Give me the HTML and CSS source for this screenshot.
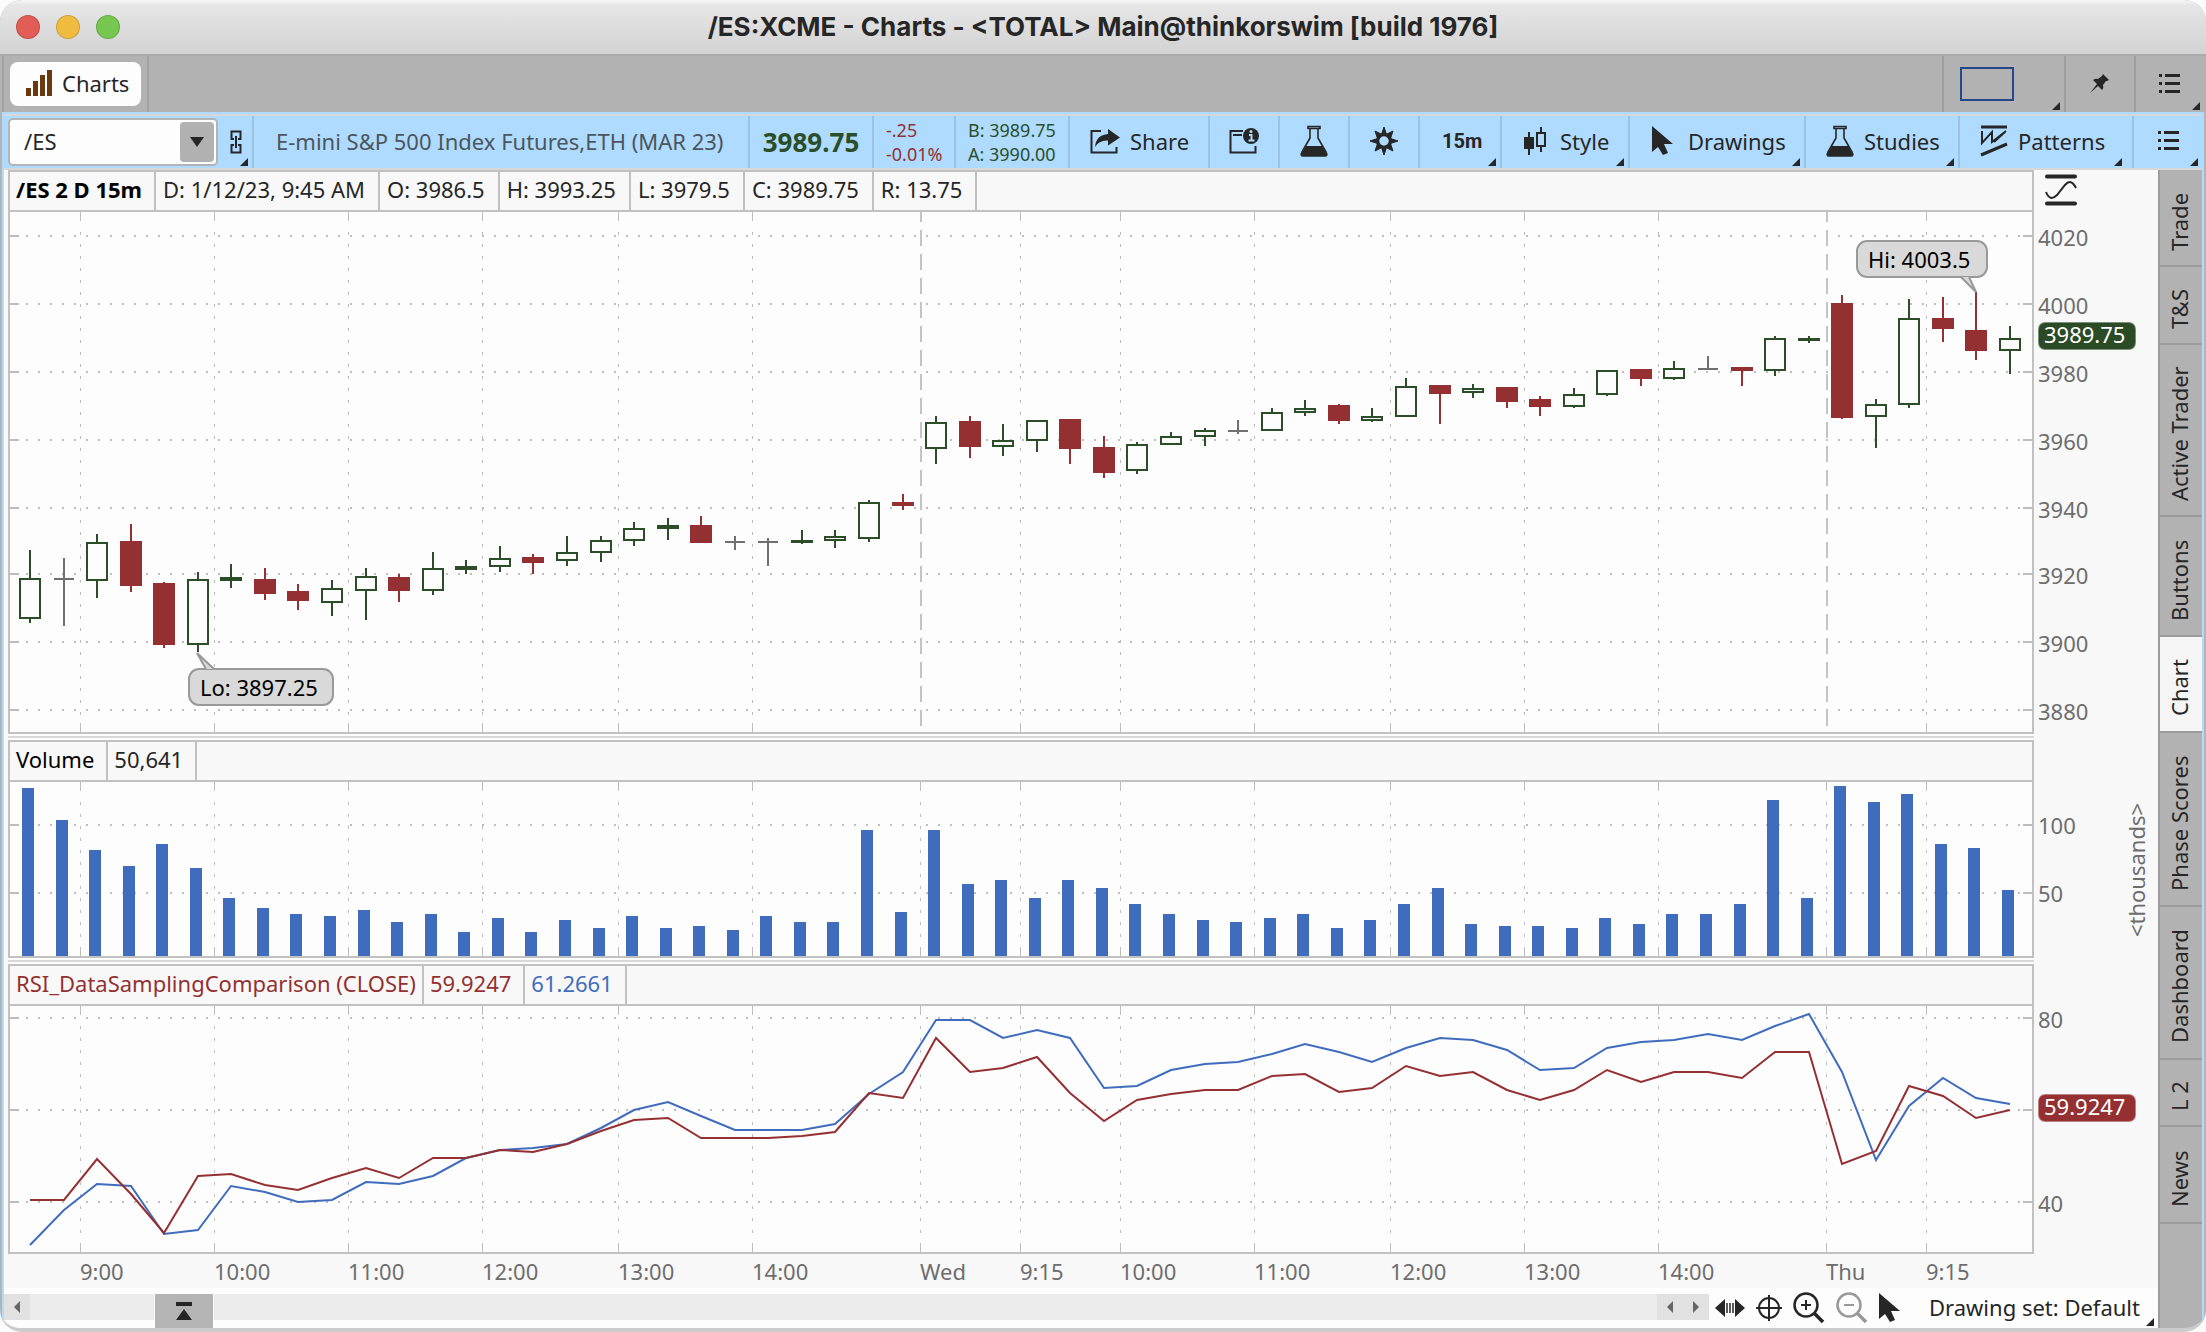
FILE: index.html
```html
<!DOCTYPE html>
<html lang="en">
<head>
<meta charset="utf-8">
<title>/ES:XCME - Charts</title>
<link rel="stylesheet" href="styles.css">
</head>
<body>
<svg class="defs" aria-hidden="true">
  <symbol id="flask" viewBox="0 0 28 32"><path d="M8 1.5h12v2H8zM10 4v9L2 27q-2 4 1 4h22q3 0 1-4L18 13V4" fill="none" stroke="#262626" stroke-width="1.6"/><path d="M6 21h16l4 7q1 3-2 3H4q-3 0-2-3z" fill="#262626"/></symbol>
  <symbol id="list" viewBox="0 0 22 22"><path d="M0 2.5h3M6 2.5h15M0 10.5h3M6 10.5h15M0 18.5h3M6 18.5h15" stroke="#262626" stroke-width="3"/></symbol>
  <symbol id="cursor" viewBox="0 0 22 30"><path d="M0 0v26l6-5 5 8 5-2-4-9h9z" fill="#262626"/></symbol>
</svg>
<div class="app">
  <header class="titlebar">
    <div class="lights"><span class="light red"></span><span class="light amber"></span><span class="light green"></span></div>
    <h1 class="title">/ES:XCME - Charts - &lt;TOTAL&gt; Main@thinkorswim [build 1976]</h1>
  </header>
  <nav class="tabs">
    <div class="tab-slot"><button class="tab"><svg width="26" height="28" viewBox="0 0 26 28"><path d="M2.5 19v8M9.500 12v15M16.500 6v21M23.500 1v26" stroke="#673a12" stroke-width="5"/></svg>Charts</button></div>
    <div class="tab-fill"></div>
    <button class="top-btn grid-btn corner" aria-label="Grid layout"><svg width="54" height="34"><rect x="1" y="1" width="52" height="32" fill="none" stroke="#26478a" stroke-width="2"/></svg></button>
    <button class="top-btn" aria-label="Pin"><svg width="20" height="20" viewBox="0 0 20 20"><path d="M13 0l6 6-2 1-1 0-3 4q1 3-1 5l-4-4-8 7 7-9-4-4q3-2 5-1l4-3z" fill="#262626"/></svg></button>
    <button class="top-btn corner last" aria-label="Menu"><svg width="22" height="22"><use href="#list"/></svg></button>
  </nav>
  <div class="frame">
    <div class="toolbar">
      <div class="cell symbol-cell corner">
        <div class="combo"><input class="combo-input" aria-label="Symbol" value="/ES"><button class="combo-btn" aria-label="Symbol list"><svg width="14" height="10"><path d="M0 0h14l-7 10z" fill="#262626"/></svg></button></div>
        <button class="link-btn" aria-label="Link"><svg width="12" height="24" viewBox="0 0 12 24"><path d="M4 9H1.500V1.500h9V9H8M4 15H1.500v7.500h9V15H8M6 6v12" fill="none" stroke="#262626" stroke-width="2"/></svg></button>
      </div>
      <div class="cell desc">E-mini S&amp;P 500 Index Futures,ETH (MAR 23)</div>
      <div class="cell price">3989.75</div>
      <div class="cell stack change"><span>-.25</span><span>-0.01%</span></div>
      <div class="cell stack quote"><span>B: 3989.75</span><span>A: 3990.00</span></div>
      <button class="cell btn share"><svg width="30" height="26" viewBox="0 0 30 26"><path d="M11 3H1.500v21.500h25V19" fill="none" stroke="#262626" stroke-width="2"/><path d="M5 19Q6 7 18 6V1l12 8.500-12 8v-5Q9 12 5 19z" fill="#262626"/></svg>Share</button>
      <button class="cell btn tool" aria-label="Information"><svg width="30" height="26" viewBox="0 0 30 26"><path d="M14 3H1.500v21.500h25V18M4 7h9" fill="none" stroke="#262626" stroke-width="2"/><circle cx="22" cy="8" r="8" fill="#262626"/><path d="M20 7h2.500v5.500M19.500 12.500h6" fill="none" stroke="#aedbff" stroke-width="2"/><circle cx="22" cy="3.500" r="1.500" fill="#aedbff"/></svg></button>
      <button class="cell btn tool" aria-label="Flask"><svg width="28" height="32"><use href="#flask"/></svg></button>
      <button class="cell btn tool" aria-label="Settings"><svg width="28" height="28" viewBox="-14 -14 28 28"><path d="M-2-8L0-14 2-8zM-2 8L0 14 2 8zM-8-2l-6 2 6 2zM8-2l6 2-6 2z" fill="#262626" stroke="#262626"/><path d="M-7-4l-2-6 6 3zM7-4l2-6-6 3zM-7 4l-2 6 6-3zM7 4l2 6-6-3z" fill="#262626" stroke="#262626"/><circle r="6.500" fill="none" stroke="#262626" stroke-width="3.500"/></svg></button>
      <button class="cell btn interval corner">15m</button>
      <button class="cell btn style corner"><svg width="24" height="28" viewBox="0 0 24 28"><path d="M0 10h10v12H0zM4 5h2v23H4z" fill="#262626"/><path d="M13 6h8v13h-8zM17 0v6M17 19v6" fill="none" stroke="#262626" stroke-width="2"/></svg>Style</button>
      <button class="cell btn drawings corner"><svg width="22" height="30"><use href="#cursor"/></svg>Drawings</button>
      <button class="cell btn studies corner"><svg width="28" height="32"><use href="#flask"/></svg>Studies</button>
      <button class="cell btn patterns corner"><svg width="28" height="32" viewBox="0 0 28 32"><path d="M1 2h26M1 30l26-11" stroke="#262626" stroke-width="3"/><path d="M2 6v12L12 7v10L26 6M14 17L25 7" fill="none" stroke="#262626" stroke-width="2"/></svg>Patterns</button>
      <button class="cell btn menu corner" aria-label="Chart menu"><svg width="22" height="22"><use href="#list"/></svg></button>
    </div>
    <div class="workspace">
      <main class="charts">
        <section class="panel price-panel">
          <div class="head"><b>/ES 2 D 15m</b><span>D: 1/12/23, 9:45 AM</span><span>O: 3986.5</span><span>H: 3993.25</span><span>L: 3979.5</span><span>C: 3989.75</span><span>R: 13.75</span></div>
          <div class="head-side"><svg width="32" height="32" viewBox="0 0 32 32"><path d="M2 2.500h28M2 29.500h28" stroke="#262626" stroke-width="4" stroke-linecap="round"/><path d="M1 18Q5 28 12 21L20 11Q26 4 31 14" fill="none" stroke="#262626" stroke-width="2"/></svg></div>
          <svg class="plot" id="pricePlot" role="img" aria-label="Price chart"></svg>
          <svg class="axis" id="priceAxis"></svg>
        </section>
        <div class="splitter"></div>
        <section class="panel volume-panel">
          <div class="head"><span class="name">Volume</span><span>50,641</span></div>
          <div class="head-side"></div>
          <svg class="plot" id="volumePlot" role="img" aria-label="Volume chart"></svg>
          <svg class="axis" id="volumeAxis"></svg>
        </section>
        <div class="splitter"></div>
        <section class="panel rsi-panel">
          <div class="head"><span class="down study">RSI_DataSamplingComparison (CLOSE)</span><span class="down">59.9247</span><span class="info">61.2661</span></div>
          <div class="head-side"></div>
          <svg class="plot" id="rsiPlot" role="img" aria-label="RSI chart"></svg>
          <svg class="axis" id="rsiAxis"></svg>
        </section>
        <svg class="times" id="timeAxis"></svg>
        <footer class="bottom corner">
          <div class="scroll">
            <button class="scroll-btn" aria-label="Scroll to start"><svg width="6" height="12"><path d="M6 0v12L0 6z" fill="#666"/></svg></button>
            <div class="thumb"><svg width="16" height="18"><path d="M0 0h16v4H0zM8 7l8 11H0z" fill="#262626"/></svg></div>
            <div class="scroll-gap"></div>
            <button class="scroll-btn" aria-label="Scroll left"><svg width="6" height="12"><path d="M6 0v12L0 6z" fill="#666"/></svg></button>
            <button class="scroll-btn" aria-label="Scroll right"><svg width="6" height="12"><path d="M0 0v12l6-6z" fill="#666"/></svg></button>
          </div>
          <div class="zoomers">
            <button class="icon" aria-label="Fit width"><svg width="30" height="18" viewBox="0 0 30 18"><path d="M10 0v18L0 9zM20 0v18l10-9z" fill="#262626"/><path d="M12 4v10M15 4v10M18 4v10" stroke="#262626" stroke-width="1.500"/></svg></button>
            <button class="icon" aria-label="Crosshair"><svg width="26" height="26" viewBox="0 0 26 26"><path d="M13 0v26M0 13h26" stroke="#262626" stroke-width="2"/><circle cx="13" cy="13" r="10" fill="none" stroke="#262626" stroke-width="2"/></svg></button>
            <button class="icon" aria-label="Zoom in"><svg width="32" height="32" viewBox="0 0 32 32"><circle cx="13" cy="13" r="11.500" fill="none" stroke="#262626" stroke-width="2.500"/><path d="M13 8v10M8 13h10" stroke="#262626" stroke-width="2"/><path d="M21 21l9 9" stroke="#262626" stroke-width="3.500"/></svg></button>
            <button class="icon" aria-label="Zoom out" disabled><svg width="32" height="32" viewBox="0 0 32 32"><circle cx="13" cy="13" r="11.500" fill="none" stroke="#999" stroke-width="2.500"/><path d="M8 13h10" stroke="#999" stroke-width="2"/><path d="M21 21l9 9" stroke="#999" stroke-width="3.500"/></svg></button>
            <button class="icon" aria-label="Pointer"><svg width="22" height="30"><use href="#cursor"/></svg></button>
          </div>
          <button class="drawing-set">Drawing set: Default</button>
        </footer>
      </main>
      <aside class="side">
        <button class="side-tab trade">Trade</button>
        <button class="side-tab ts">T&amp;S</button>
        <button class="side-tab active-trader">Active Trader</button>
        <button class="side-tab buttons">Buttons</button>
        <button class="side-tab chart current">Chart</button>
        <button class="side-tab phase">Phase Scores</button>
        <button class="side-tab dashboard">Dashboard</button>
        <button class="side-tab l2">L 2</button>
        <button class="side-tab news">News</button>
      </aside>
    </div>
  </div>
</div>
<script src="charts.js"></script>
</body>
</html>
```
FILE: styles.css
```css
* { box-sizing: border-box; }
body { margin: 0; background: #fbfbfb; color: #262626; font: 22px/30px "Noto Sans", "Open Sans", sans-serif; }
button, input { font: inherit; color: inherit; border: 0; background: none; padding: 0; margin: 0; }
svg { flex: none; }
.defs { position: absolute; width: 0; height: 0; }
.app { display: flex; flex-direction: column; height: 100vh; min-height: 800px; overflow: hidden; border-radius: 22px; background: #b4b4b4; border-bottom: 4px solid #cccccc; }

.titlebar { flex: none; display: grid; grid-template-columns: 1fr auto 1fr; align-items: center; height: 56px; padding: 0 16px; background: linear-gradient(#f6f6f6, #e6e6e6 10%, #d2d2d2); border-bottom: 2px solid #ababab; }
.lights { display: flex; gap: 16px; }
.light { width: 24px; height: 24px; border-radius: 50%; border: 1px solid rgba(0, 0, 0, .15); }
.light.red { background: #e25d55; }
.light.amber { background: #efbc40; }
.light.green { background: #75c750; }
.title { margin: 0; font: 700 26px/30px Inter, sans-serif; }

.tabs { flex: none; display: flex; height: 56px; padding: 0 2px; background: #b2b2b2; }
.tab-slot { display: flex; align-items: center; padding: 0 6px; border: 2px solid #a2a2a2; border-width: 0 2px; }
.tab { display: flex; align-items: center; gap: 10px; height: 44px; padding: 0 12px 2px 16px; border-radius: 8px; background: #fdfdfd; }
.tab-fill { flex: 1; }
.top-btn { position: relative; display: flex; align-items: center; justify-content: center; width: 70px; border-left: 2px solid #9e9e9e; }
.grid-btn { width: 122px; justify-content: flex-start; padding-left: 16px; }
.corner { position: relative; }
.corner::after { content: ""; position: absolute; right: 4px; bottom: 2px; border: 4px solid transparent; border-right-color: #262626; border-bottom-color: #262626; }
.patterns.corner::after { right: 10px; }

.frame { flex: 1; min-height: 0; display: flex; flex-direction: column; border: solid #aedbff; border-width: 2px 2px 0; margin: 0 2px; }
.toolbar { flex: none; display: flex; height: 56px; border: solid #d8d8d8; border-width: 2px 0; background: #aedbff; }
.cell { flex: none; display: flex; align-items: center; border-right: 2px solid #9cc2e2; white-space: nowrap; }
.symbol-cell { width: 250px; padding-left: 4px; gap: 12px; }
.combo { display: flex; width: 210px; height: 48px; padding: 2px; border: 2px solid #b4b4b4; border-radius: 5px; background: #fdfdfd; }
.combo-input { flex: 1; min-width: 0; padding: 0 0 2px 12px; }
.combo-btn { display: flex; align-items: center; justify-content: center; width: 34px; border-radius: 4px; background: #b1b1b1; }
.link-btn { display: flex; }
.desc { flex: 1; padding: 0 0 2px 22px; color: #4c555c; overflow: hidden; }
.price { width: 124px; justify-content: center; font-size: 26px; font-weight: 700; color: #2b4e28; }
.stack { flex-direction: column; align-items: flex-start; justify-content: center; font-size: 18px; line-height: 24px; }
.change { width: 82px; padding-left: 12px; color: #943032; }
.quote { width: 114px; padding-left: 12px; color: #2b4e28; }
.btn { gap: 10px; padding-bottom: 2px; }
.share { width: 140px; padding-left: 20px; }
.tool { width: 70px; justify-content: center; }
.interval { width: 82px; padding-left: 22px; font: 700 20px/30px Roboto, sans-serif; }
.style { width: 128px; padding-left: 22px; gap: 12px; }
.drawings { width: 176px; padding-left: 22px; gap: 14px; }
.studies { width: 154px; padding-left: 20px; }
.patterns { width: 174px; padding-left: 20px; }
.menu { flex: 1 1 68px; max-width: 68px; padding-left: 24px; border: 0; }

.workspace { flex: 1; min-height: 0; display: flex; background: #fdfdfd; }
.charts { flex: 1; min-width: 0; display: flex; flex-direction: column; padding-left: 4px; background: #f8f8f8; }
.panel { display: grid; grid-template: 42px 1fr / 1fr 124px; min-height: 0; }
.price-panel { flex: 564 1 0; }
.volume-panel { flex: 218 1 0; }
.rsi-panel { flex: 290 1 0; }
.head { display: flex; border: 2px solid #c1c1c1; background: #f8f8f8; overflow: hidden; }
.head > * { flex: none; padding: 0 12px 0 6px; border-right: 2px solid #c1c1c1; line-height: 34px; white-space: nowrap; }
.price-panel .head span { padding: 0 13px 0 7px; }
.head .study { padding-right: 6px; }
.head b, .head .name { color: #000; }
.head .down { color: #943032; }
.head .info { color: #406cbd; }
.head-side { padding: 4px 0 0 11px; line-height: 0; }
.plot { width: 100%; height: 100%; min-height: 0; border: 2px solid #c1c1c1; border-top: 0; background: #fdfdfd; }
.axis { width: 124px; height: 100%; min-height: 0; }
.splitter { flex: none; height: 6px; margin-right: 124px; border: solid #fdfdfd; border-width: 2px 0; background: #d8d8d8; }
.times { flex: none; width: 100%; height: 34px; }
.axis text, .times text { fill: #6d6d6d; }
.axis text.on { fill: #fff; }

.bottom { flex: none; display: flex; height: 40px; margin-left: -4px; background: #fdfdfd; }
.scroll { flex: 1; display: flex; height: 26px; margin-top: 6px; background: #ececec; }
.scroll-btn { display: flex; align-items: center; justify-content: center; width: 26px; background: #e1e1e1; }
.thumb { display: flex; align-items: center; justify-content: center; width: 60px; height: 34px; margin-left: 124px; border: solid #fdfdfd; border-width: 0 1px; background: #b4b4b4; }
.scroll-gap { flex: 1; }
.zoomers { display: flex; align-items: center; gap: 11px; padding-left: 6px; }
.icon { display: flex; }
.drawing-set { padding: 0 18px 2px 28px; white-space: nowrap; }

.side { flex: none; width: 44px; display: flex; flex-direction: column; background: #b2b2b2; border-left: 2px solid #9c9c9c; }
.side-tab { display: flex; align-items: center; justify-content: center; min-height: 0; width: 42px; padding: 0 0 8px 4px; writing-mode: vertical-rl; transform: rotate(180deg); border-top: 2px solid #9c9c9c; white-space: nowrap; }
.side-tab.current { background: #f5f5f5; }
.trade { flex: 0 1 97px; }
.ts { flex: 0 1 78px; }
.active-trader { flex: 0 1 172px; }
.buttons { flex: 0 1 120px; }
.chart { flex: 0 1 96px; }
.phase { flex: 0 1 174px; }
.dashboard { flex: 0 1 153px; }
.l2 { flex: 0 1 67px; }
.news { flex: 0 1 97px; }
```
FILE: charts.js
```js
// Levels below are in canvas units; each panel maps its own [top, height] span to its box.
const SPAN = 2022;
const GREEN = '#2b4e28', RED = '#943032', BLUE = '#406cbd', GRAY = '#707070', GRID = '#bdbdbd';
const PRICE = [212, 520], VOLUME = [782, 174], RSI = [1006, 246];

// kind, high, body top, body bottom, low
const candles = [
  ['u',550,578,619,623],['n',558,579,579,626],['u',534,542,581,598],['d',524,541,586,592],['d',582,583,645,648],['u',572,579,645,652],
  ['s',564,577,581,588],['d',568,579,594,600],['d',584,591,601,610],['u',580,588,603,616],['u',568,576,591,620],['d',574,577,591,602],
  ['u',552,568,591,595],['s',560,566,570,574],['u',546,558,567,572],['d',554,557,563,574],['u',536,552,561,566],['u',536,540,553,562],
  ['u',522,528,541,546],['s',518,525,529,540],['d',516,525,543,543],['n',536,542,542,550],['n',538,542,542,566],['s',530,540,543,544],
  ['u',530,536,541,548],['u',500,502,539,542],['d',494,502,506,510],['u',416,422,449,464],['d',416,421,447,458],['u',424,440,447,456],
  ['u',420,420,441,452],['d',419,419,449,464],['d',436,447,473,478],['u',442,444,471,474],['u',432,436,445,445],['u',428,430,437,446],
  ['n',420,431,431,434],['u',408,412,431,431],['u',400,408,413,416],['d',404,405,421,424],['u',408,416,421,422],['u',378,386,417,417],
  ['d',385,385,394,424],['u',384,388,393,398],['d',387,387,402,408],['d',396,399,407,416],['u',388,394,407,408],['u',370,370,395,396],
  ['d',369,369,379,386],['u',361,368,379,380],['n',356,369,369,370],['d',367,367,371,386],['u',336,338,371,376],['s',336,338,341,343],
  ['d',295,303,418,419],['u',399,404,417,448],['u',299,318,405,408],['d',297,318,329,342],['d',292,330,351,360],['u',326,338,351,374]];
const volumes = [788,820,850,866,844,868,898,908,914,916,910,922,914,932,918,932,920,928,916,928,926,930,916,922,922,830,912,830,884,880,
  898,880,888,904,914,920,922,918,914,928,920,904,888,924,926,926,928,918,924,914,914,904,800,898,786,802,794,844,848,890];
const rsiRed = [1200,1200,1159,1194,1233,1176,1174,1185,1190,1178,1168,1178,1158,1158,1150,1152,1144,1131,1120,1118,1138,1138,1138,1136,1132,1093,1098,1038,1072,1068,
  1057,1093,1121,1100,1094,1090,1090,1076,1074,1092,1088,1066,1076,1072,1090,1100,1090,1070,1082,1072,1072,1078,1052,1052,1164,1151,1086,1096,1118,1110];
const rsiBlue = [1245,1210,1184,1186,1234,1230,1186,1192,1202,1200,1182,1184,1176,1158,1150,1148,1144,1128,1110,1102,1116,1130,1130,1130,1124,1094,1072,1020,1020,1038,
  1030,1038,1088,1086,1070,1064,1062,1054,1044,1052,1062,1048,1038,1040,1050,1070,1068,1048,1042,1040,1034,1040,1026,1014,1072,1160,1106,1078,1098,1104];
const times = [[70,'9:00'],[204,'10:00'],[338,'11:00'],[472,'12:00'],[608,'13:00'],[742,'14:00'],[910,'Wed'],[1010,'9:15'],[1110,'10:00'],
  [1244,'11:00'],[1380,'12:00'],[1514,'13:00'],[1648,'14:00'],[1816,'Thu'],[1916,'9:15']];
const days = [910, 1816];

const el = (tag, attrs, text) =>
  `<${tag} ${Object.entries(attrs).map(([k, v]) => `${k}="${v}"`).join(' ')}>${text || ''}</${tag}>`;
const line = (x1, y1, x2, y2, stroke, more) => el('line', { x1, y1, x2, y2, stroke, 'stroke-width': 2, ...more });

function box(id, span) {
  const node = document.getElementById(id);
  const w = node.clientWidth || node.getBoundingClientRect().width - 4;
  const h = (node.clientHeight || node.getBoundingClientRect().height - 2);
  return { node, w, h, x: v => Math.round(v * w / SPAN), y: v => Math.round((v - span[0]) * h / span[1]) };
}
const centre = i => 20 + 33.56 * i;

function grid(b, rows, dayLines) {
  let out = '';
  for (const r of rows) {
    const y = b.y(r);
    out += line(16, y, b.w - 12, y, GRID, { 'stroke-dasharray': '2 10' });
    out += line(0, y, 9, y, GRID) + line(b.w - 9, y, b.w, y, GRID);
  }
  for (const [t] of times) {
    const x = b.x(t);
    if (dayLines && days.includes(t)) {
      out += line(x + 1, 0, x + 1, b.h, '#c4c4c4', { 'stroke-dasharray': '16 8', 'stroke-dashoffset': 6 });
      continue;
    }
    out += line(x + .5, 20, x + .5, b.h - 12, GRID, { 'stroke-width': 1, 'stroke-dasharray': '3 9' });
    out += line(x + .5, 0, x + .5, 9, GRID, { 'stroke-width': 1 }) + line(x + .5, b.h - 9, x + .5, b.h, GRID, { 'stroke-width': 1 });
  }
  return out;
}

function callout(b, left, top, width, text, tail) {
  const x = b.x(left), y = b.y(top), dx = x - left;
  const pts = tail.map(([px, py]) => `${px + dx},${b.y(py)}`);
  return el('rect', { x, y, width, height: 36, rx: 10, fill: '#d9d9d9', stroke: '#999', 'stroke-width': 2 }) +
    el('polygon', { points: pts.join(' '), fill: '#d9d9d9' }) +
    el('polyline', { points: pts.join(' '), fill: 'none', stroke: '#999', 'stroke-width': 2 }) +
    el('text', { x: x + 11, y: y + 27, fill: '#000' }, text);
}

function drawPrice() {
  const b = box('pricePlot', PRICE);
  let out = grid(b, [236, 304, 372, 440, 508, 574, 642, 710], true);
  candles.forEach(([kind, hi, top, bottom, lo], i) => {
    const x = b.x(centre(i)), t = b.y(top), h = b.y(bottom) - t;
    const colour = { u: GREEN, s: GREEN, d: RED, n: GRAY }[kind];
    out += line(x, b.y(hi), x, b.y(lo), colour);
    if (kind === 'n') out += line(x - 10, t, x + 10, t, colour);
    else if (kind === 'u') out += el('rect', { x: x - 10, y: t + 1, width: 20, height: h - 2, fill: '#fdfdfd', stroke: colour, 'stroke-width': 2 });
    else out += el('rect', { x: x - 11, y: t, width: 22, height: h, fill: colour });
  });
  out += callout(b, 1847, 241, 130, 'Hi: 4003.5', [[1951, 277], [1966, 292], [1959, 277]]);
  out += callout(b, 179, 669, 144, 'Lo: 3897.25', [[196, 669], [187, 653], [204, 669]]);
  b.node.innerHTML = out;
}

function drawVolume() {
  const b = box('volumePlot', VOLUME);
  let out = grid(b, [825, 893]);
  volumes.forEach((v, i) => {
    out += el('rect', { x: b.x(centre(i)) - 8, y: b.y(v), width: 12, height: b.h - b.y(v), fill: BLUE });
  });
  b.node.innerHTML = out;
}

function drawRsi() {
  const b = box('rsiPlot', RSI);
  const path = (data, stroke) => el('polyline', { points: data.map((v, i) => `${b.x(centre(i))},${b.y(v)}`).join(' '), fill: 'none', stroke, 'stroke-width': 2 });
  b.node.innerHTML = grid(b, [1018, 1110, 1202]) + path(rsiBlue, BLUE) + path(rsiRed, RED);
}

function drawAxis(id, span, labels, badge) {
  const node = document.getElementById(id);
  const h = node.getBoundingClientRect().height - 2;
  const y = v => Math.round((v - span[0]) * h / span[1]);
  let out = labels.map(([v, t]) => el('text', { x: 4, y: y(v) + 10 }, t)).join('');
  if (badge) {
    const [v, text, colour] = badge;
    out += el('rect', { x: 5, y: y(v) - 13, width: 96, height: 26, rx: 6, fill: colour, stroke: colour, 'stroke-opacity': .6, 'stroke-width': 2 });
    out += el('text', { x: 10, y: y(v) + 7, class: 'on' }, text);
  }
  if (id === 'volumeAxis') out += el('text', { transform: `translate(111 ${y(870)}) rotate(-90)`, 'text-anchor': 'middle' }, '&lt;thousands&gt;');
  node.innerHTML = out;
}

function draw() {
  drawPrice();
  drawVolume();
  drawRsi();
  drawAxis('priceAxis', PRICE, [[236, 4020], [304, 4000], [372, 3980], [440, 3960], [508, 3940], [574, 3920], [642, 3900], [710, 3880]], [336, '3989.75', '#2b4a26']);
  drawAxis('volumeAxis', VOLUME, [[824, 100], [892, 50], [959, 0]]);
  drawAxis('rsiAxis', RSI, [[1018, 80], [1202, 40]], [1108, '59.9247', RED]);
  const b = box('pricePlot', PRICE);
  document.getElementById('timeAxis').innerHTML = times.map(([t, s]) => el('text', { x: b.x(t) + 2, y: 26 }, s)).join('');
}
draw();
addEventListener('resize', draw);
```
